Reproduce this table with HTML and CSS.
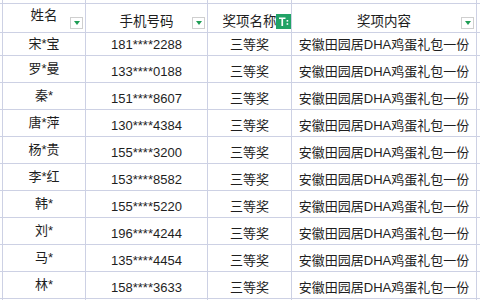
FILE: index.html
```html
<!DOCTYPE html>
<html lang="zh-CN">
<head>
<meta charset="utf-8">
<title>中奖名单</title>
<link rel="stylesheet" href="styles.css">
</head>
<body>
<div class="sheet">
  <div class="c"></div><div class="c"></div><div class="c"></div><div class="c"></div><div class="c"></div><div class="c"></div>
  <div class="c"></div>
  <div class="c n h">姓名<span class="dd"><span class="tri"></span></span></div>
  <div class="c t h">手机号码<span class="dd"><span class="tri"></span></span></div>
  <div class="c t h">奖项名称<span class="flt"><svg width="15" height="15" viewBox="0 0 15 15"><path d="M3 3.5h6.5v1.6H7.1V12H5.4V5.1H3z" fill="#fff"/><rect x="10.6" y="6" width="1.6" height="1.6" fill="#fff"/><rect x="10.6" y="9.2" width="1.6" height="1.6" fill="#fff"/></svg></span></div>
  <div class="c t h">奖项内容<span class="dd"><span class="tri"></span></span></div>
  <div class="c"></div>

  <div class="c"></div><div class="c n">宋*宝</div><div class="c t">181****2288</div><div class="c t">三等奖</div><div class="c t">安徽田园居DHA鸡蛋礼包一份</div><div class="c"></div>
  <div class="c"></div><div class="c n">罗*曼</div><div class="c t">133****0188</div><div class="c t">三等奖</div><div class="c t">安徽田园居DHA鸡蛋礼包一份</div><div class="c"></div>
  <div class="c"></div><div class="c n">秦*</div><div class="c t">151****8607</div><div class="c t">三等奖</div><div class="c t">安徽田园居DHA鸡蛋礼包一份</div><div class="c"></div>
  <div class="c"></div><div class="c n">唐*萍</div><div class="c t">130****4384</div><div class="c t">三等奖</div><div class="c t">安徽田园居DHA鸡蛋礼包一份</div><div class="c"></div>
  <div class="c"></div><div class="c n">杨*贵</div><div class="c t">155****3200</div><div class="c t">三等奖</div><div class="c t">安徽田园居DHA鸡蛋礼包一份</div><div class="c"></div>
  <div class="c"></div><div class="c n">李*红</div><div class="c t">153****8582</div><div class="c t">三等奖</div><div class="c t">安徽田园居DHA鸡蛋礼包一份</div><div class="c"></div>
  <div class="c"></div><div class="c n">韩*</div><div class="c t">155****5220</div><div class="c t">三等奖</div><div class="c t">安徽田园居DHA鸡蛋礼包一份</div><div class="c"></div>
  <div class="c"></div><div class="c n">刘*</div><div class="c t">196****4244</div><div class="c t">三等奖</div><div class="c t">安徽田园居DHA鸡蛋礼包一份</div><div class="c"></div>
  <div class="c"></div><div class="c n">马*</div><div class="c t">135****4454</div><div class="c t">三等奖</div><div class="c t">安徽田园居DHA鸡蛋礼包一份</div><div class="c"></div>
  <div class="c"></div><div class="c n">林*</div><div class="c t">158****3633</div><div class="c t">三等奖</div><div class="c t">安徽田园居DHA鸡蛋礼包一份</div><div class="c"></div>

  <div class="c"></div><div class="c"></div><div class="c"></div><div class="c"></div><div class="c"></div><div class="c"></div>
</div>
</body>
</html>
```

FILE: styles.css
```css
html, body {
  margin: 0;
  padding: 0;
  background: #ffffff;
}

.sheet {
  width: 480px;
  height: 300px;
  overflow: hidden;
  display: grid;
  grid-template-columns: 2px 82px 121px 83px 184px 3px;
  grid-template-rows: 3px 28px 22px repeat(9, 26px) 1px;
  gap: 1px;
  background: #cdd1e4;
  font-family: "Liberation Sans", "Noto Sans CJK SC", sans-serif;
  font-size: 13px;
  color: #1e1e1e;
}

.c {
  background: #ffffff;
  display: flex;
  justify-content: center;
  white-space: nowrap;
  line-height: 16px;
  min-width: 0;
}

.n {
  align-items: center;
  padding-bottom: 1px;
}

.t {
  align-items: flex-end;
  padding-bottom: 2px;
}

.h {
  position: relative;
  font-size: 13.5px;
}

.n.h {
  padding-bottom: 4px;
}

.dd {
  position: absolute;
  right: 2px;
  bottom: 3px;
  width: 13px;
  height: 12px;
  box-sizing: border-box;
  border: 1px solid #cfcfcf;
  background: #ffffff;
  display: flex;
  align-items: center;
  justify-content: center;
}

.tri {
  width: 0;
  height: 0;
  border-left: 3.5px solid transparent;
  border-right: 3.5px solid transparent;
  border-top: 4px solid #1f9d55;
}

.flt {
  position: absolute;
  right: 0;
  bottom: 3px;
  width: 15px;
  height: 15px;
  background: #21a366;
  display: flex;
}
```
